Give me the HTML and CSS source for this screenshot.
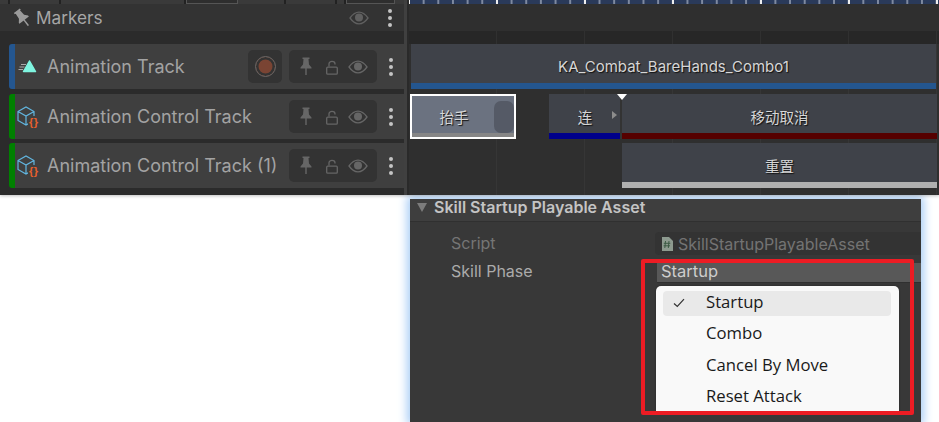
FILE: index.html
```html
<!DOCTYPE html>
<html lang="en">
<head>
    <meta charset="UTF-8">
    <title>Timeline</title>
    <link rel="stylesheet" href="styles.css">
</head>
<body>
<svg class="defs" width="0" height="0">
    <symbol id="eye" viewBox="0 0 20 14">
        <path d="M1 7C4 2.800 7 1.200 10 1.200S16 2.800 19 7C16 11.200 13 12.800 10 12.800S4 11.200 1 7Z" fill="none" stroke="currentColor" stroke-width="1.300"/>
        <circle cx="10" cy="6.600" r="4" fill="currentColor"/>
    </symbol>
    <symbol id="pin" viewBox="0 0 12 18">
        <path d="M2.500 0.500H9.500V2H8.500L9 7.500L11.500 10.500V11.500H0.500V10.500L3 7.500L3.500 2H2.500ZM5.300 11.500H6.700V18H5.300Z" fill="currentColor"/>
    </symbol>
    <symbol id="lock" viewBox="0 0 12 15">
        <path d="M3 6.500V3.800C3 0.500 9 0.500 9 3.800V4.500" fill="none" stroke="currentColor" stroke-width="1.300"/>
        <rect x="0.700" y="7.200" width="10.600" height="7" rx="1" fill="none" stroke="currentColor" stroke-width="1.300"/>
    </symbol>
    <symbol id="cube" viewBox="0 0 22 21">
        <path d="M1 5.500L9 1L17 5.500V14.500L9 19L1 14.500ZM1 5.500L9 10L17 5.500M9 10V19" fill="none" stroke="#62b6e0" stroke-width="1.200"/>
        <rect x="11" y="10" width="11" height="11" fill="#3f3f3f"/>
    </symbol>
</svg>

<div class="timeline">
    <div class="headers">
        <div class="toolbar-edge">
            <span class="edge-tab w10"></span>
            <span class="edge-tab w51"></span>
            <span class="edge-tab w125"></span>
            <span class="edge-tab w52 on"></span>
            <span class="edge-tab w48"></span>
            <span class="edge-tab w51"></span>
            <span class="edge-tab w9"></span>
            <span class="edge-tab w49 on"></span>
        </div>
        <div class="markers-row">
            <svg class="markers-pin" viewBox="0 0 12 18"><use href="#pin"/></svg>
            <span class="markers-name">Markers</span>
            <svg class="eye"><use href="#eye"/></svg>
            <div class="kebab"><i></i><i></i><i></i></div>
        </div>
        <div class="track blue first">
            <svg class="track-icon" viewBox="0 0 24 22">
                <path d="M12.500 5L18.500 15.500H6.500Z" fill="#7ff5e0" stroke="#7ff5e0" stroke-width="1.500" stroke-linejoin="round"/>
                <path d="M4 8.500H9M2.500 11H7.500M1.500 13.500H6" stroke="#a9a9a9" stroke-width="1"/>
            </svg>
            <span class="track-name">Animation Track</span>
            <div class="rec-box"><span class="rec"></span></div>
            <div class="btn-group">
                <svg class="pin"><use href="#pin"/></svg>
                <svg class="lock"><use href="#lock"/></svg>
                <svg class="eye"><use href="#eye"/></svg>
            </div>
            <div class="kebab"><i></i><i></i><i></i></div>
        </div>
        <div class="track green">
            <svg class="track-icon" viewBox="0 0 24 22">
                <use href="#cube" width="22" height="21"/>
                <text x="12" y="19.500" class="braces">{}</text>
            </svg>
            <span class="track-name">Animation Control Track</span>
            <div class="btn-group">
                <svg class="pin"><use href="#pin"/></svg>
                <svg class="lock"><use href="#lock"/></svg>
                <svg class="eye"><use href="#eye"/></svg>
            </div>
            <div class="kebab"><i></i><i></i><i></i></div>
        </div>
        <div class="track green last">
            <svg class="track-icon" viewBox="0 0 24 22">
                <use href="#cube" width="22" height="21"/>
                <text x="12" y="19.500" class="braces">{}</text>
            </svg>
            <span class="track-name">Animation Control Track (1)</span>
            <div class="btn-group">
                <svg class="pin"><use href="#pin"/></svg>
                <svg class="lock"><use href="#lock"/></svg>
                <svg class="eye"><use href="#eye"/></svg>
            </div>
            <div class="kebab"><i></i><i></i><i></i></div>
        </div>
    </div>
    <div class="splitter"></div>
    <div class="lanes">
        <div class="ruler"></div>
        <div class="marker-lane"></div>
        <div class="grid-band"></div>
        <div class="lane lane-one">
            <div class="clip clip-anim">
                <span class="clip-name">KA_Combat_BareHands_Combo1</span>
                <span class="clip-bar bar-blue"></span>
            </div>
        </div>
        <div class="lane lane-two">
            <div class="clip clip-selected">
                <span class="clip-name">抬手</span>
                <span class="blend"></span>
                <span class="clip-bar bar-grey"></span>
            </div>
            <div class="clip clip-combo">
                <span class="clip-name">连</span>
                <span class="clip-arrow"></span>
                <span class="clip-bar bar-navy"></span>
            </div>
            <div class="playhead"></div>
            <div class="clip clip-cancel">
                <span class="clip-name">移动取消</span>
                <span class="clip-bar bar-red"></span>
            </div>
        </div>
        <div class="lane lane-three">
            <div class="clip clip-reset">
                <span class="clip-name">重置</span>
                <span class="clip-bar bar-light"></span>
            </div>
        </div>
    </div>
</div>

<div class="inspector">
    <div class="insp-head">
        <span class="fold"></span>
        <span class="insp-title">Skill Startup Playable Asset</span>
    </div>
    <div class="prop prop-script">
        <span class="prop-label">Script</span>
        <div class="script-field">
            <svg class="cs-icon" viewBox="0 0 12 14">
                <path d="M1 0H8L12 4V14H1Z" fill="#8d9a8f"/>
                <path d="M4.500 4L3.800 11M8 4L7.300 11M2.800 6.300H9.300M2.600 8.800H9" stroke="#3c5a44" stroke-width="1"/>
            </svg>
            <span>SkillStartupPlayableAsset</span>
        </div>
    </div>
    <div class="prop prop-phase">
        <span class="prop-label">Skill Phase</span>
        <div class="phase-field">Startup</div>
    </div>

    <ul class="menu">
        <li class="active"><svg class="check" viewBox="0 0 12 10"><path d="M1 5.500L4.300 8.500L11 1.200" fill="none" stroke="#333" stroke-width="1.200"/></svg>Startup</li>
        <li>Combo</li>
        <li>Cancel By Move</li>
        <li>Reset Attack</li>
    </ul>
    <div class="red-box"></div>
</div>
</body>
</html>
```

FILE: styles.css
```css
*{
    margin:0;padding:0;
    box-sizing:border-box;
}
html,body{
    width:939px;
    height:422px;
    overflow:hidden;
    background:#fff;
}
body{
    font-family:Inter,"Noto Sans CJK SC",sans-serif;
}
.defs{
    display:block;
    height:0;
}

/* timeline window */
.timeline{
    position:relative;
    z-index:2;
    display:flex;
    height:195px;
    background:#2b2b2b;
    box-shadow:0 1px 3px rgba(0,0,0,.25);
}
.headers{
    width:404px;
    flex:none;
    background:#2b2b2b;
}
.toolbar-edge{
    display:flex;
    height:4px;
    background:#3a3a3a;
}
.edge-tab{
    height:4px;
    border-right:2px solid #222;
}
.edge-tab.on{
    background:#2e2e2e;
    border:1px solid #555;
    border-top:0;
    border-width:0 1px 1px 1px;
}
.w9{width:9px}
.w10{width:10px}
.w48{width:48px}
.w49{width:49px}
.w51{width:51px}
.w52{width:52px}
.w125{width:125px}

.markers-row{
    display:flex;
    align-items:center;
    height:27px;
    background:#333;
    margin-bottom:13px;
    padding-left:16px;
}
.markers-pin{
    width:13px;
    height:20px;
    color:#9a9a9a;
    transform:rotate(-38deg);
    margin-right:7px;
    flex:none;
}
.markers-name{
    flex:1;
    font-size:17.200px;
    color:#a6a6a6;
}
.markers-row .eye{
    color:#606060;
    margin-right:7px;
}
.eye{
    width:20px;
    height:14px;
    color:#666;
    flex:none;
}
.kebab{
    width:27px;
    flex:none;
    display:flex;
    flex-direction:column;
    align-items:center;
    gap:3px;
}
.kebab i{
    width:4px;
    height:4px;
    border-radius:50%;
    background:#c4c4c4;
}
.markers-row .kebab{
    width:28px;
}

.track{
    display:flex;
    align-items:center;
    height:45px;
    margin:0 0 5px 9px;
    background:#3f3f3f;
    border-left:6px solid;
    border-radius:3px 0 0 3px;
}
.track.blue{border-color:#24568f}
.track.green{
    border-color:#008000;
    margin-bottom:4px;
}
.track-icon{
    width:24px;
    height:22px;
    margin:0 6px 0 2px;
    flex:none;
}
.track-name{
    flex:1;
    font-size:18px;
    color:#a3a3a3;
    white-space:nowrap;
}
.braces{
    font-family:"Liberation Sans",sans-serif;
    font-size:11px;
    font-weight:bold;
    letter-spacing:.5px;
    fill:#e8602c;
}
.rec-box{
    width:34px;
    height:33px;
    margin-right:7px;
    background:#333;
    border-radius:5px;
    display:flex;
    align-items:center;
    justify-content:center;
    flex:none;
}
.rec{
    width:21px;
    height:21px;
    border-radius:50%;
    border:1.500px solid #666;
    background:#7a4433;
    box-shadow:inset 0 0 0 2.500px #333;
}
.btn-group{
    width:88px;
    height:33px;
    background:#333;
    border-radius:5px;
    display:flex;
    align-items:center;
    padding-left:11px;
    flex:none;
}
.pin{
    width:12px;
    height:18px;
    color:#666;
    margin-top:-2px;
}
.lock{
    width:12px;
    height:15px;
    color:#666;
    margin-left:14px;
    margin-top:1px;
}
.btn-group .eye{
    margin-left:10px;
}

.splitter{
    width:5px;
    flex:none;
    background:linear-gradient(90deg,#404040 3px,#2a2a2a 3px);
}

/* lanes on the right */
.lanes{
    flex:1;
    min-width:0;
    overflow:hidden;
    background-color:#2f2f2f;
    background-image:linear-gradient(90deg,transparent 87px,#363636 87px,#363636 89px,transparent 89px);
    background-size:88px 100%;
}
.ruler{
    height:4px;
    background-color:#2a3a5a;
    background-image:
        linear-gradient(90deg,#eee 2px,transparent 2px),
        linear-gradient(90deg,#7f8aa0 1.500px,transparent 1.500px),
        linear-gradient(#2a3a5a,#2a3a5a);
    background-size:88px 100%,14.670px 100%,100% 100%;
    background-position:-1px 0,-1px 0,0 0;
}
.marker-lane{
    height:27px;
    background:#2f2f2f;
}
.grid-band{
    height:13px;
    background:#272727 linear-gradient(90deg,transparent 87px,#303030 87px,#303030 89px,transparent 89px);
    background-size:88px 100%;
}
.lane{
    position:relative;
    display:flex;
    height:45px;
    margin-bottom:5px;
}
.lane-one{padding-left:2px}
.lane-two{
    padding-left:1px;
    margin-bottom:4px;
}
.lane-three{padding-left:213px}

.clip{
    position:relative;
    height:45px;
    background:#3f4249;
    display:flex;
    align-items:center;
    justify-content:center;
    flex:none;
}
.clip-name{
    font-size:14.500px;
    color:#d6d6d6;
    text-shadow:1px 1px 1px #111;
    white-space:nowrap;
}
.clip-bar{
    position:absolute;
    left:0;
    right:0;
    bottom:0;
    height:6px;
}
.clip-anim{width:525px}
.clip-anim .clip-name{
    font-size:15px;
}
.bar-blue{background:#24568f}
.clip-selected{
    width:106px;
    margin-right:33px;
    background:#6b7280;
    border:2px solid #fff;
    padding:0 18px 0 0;
}
.bar-grey{
    background:#868686;
    height:4px;
}
.blend{
    position:absolute;
    right:0;
    top:5px;
    bottom:4px;
    width:20px;
    border-radius:7px;
    background:#555a66;
}
.clip-combo{
    width:71px;
    padding-left:1px;
}
.bar-navy{background:#00008b}
.clip-arrow{
    position:absolute;
    left:63px;
    top:17px;
    border-left:5px solid #8c8c8c;
    border-top:4px solid transparent;
    border-bottom:4px solid transparent;
}
.playhead{
    position:relative;
    z-index:1;
    width:2px;
    flex:none;
    background:#333;
}
.playhead:before{
    content:"";
    position:absolute;
    left:-3px;
    top:0;
    border-top:6px solid #fff;
    border-left:5px solid transparent;
    border-right:5px solid transparent;
}
.clip-cancel,.clip-reset{width:315px}
.bar-red{background:#560000}
.bar-light{background:#b0b0b0}

/* inspector */
.inspector{
    position:relative;
    z-index:1;
    width:511px;
    height:223px;
    margin:4px 0 0 410px;
    background:#383838;
    box-shadow:0 0 9px 3px #a9cdf6;
}
.insp-head{
    display:flex;
    align-items:center;
    height:23px;
    background:#3e3e3e;
    border-bottom:1px solid #303030;
    padding:0 0 6px 7px;
}
.fold{
    width:0;
    height:0;
    border-top:9px solid #7c7c7c;
    border-left:5.500px solid transparent;
    border-right:5.500px solid transparent;
    margin-right:6px;
}
.insp-title{
    font-size:16px;
    font-weight:600;
    color:#c4c4c4;
    margin-left:1px;
}
.prop{
    display:flex;
    align-items:center;
    padding-left:41px;
    font-size:16px;
}
.prop-label{
    width:204px;
    flex:none;
}
.prop-script{
    margin-top:10px;
    height:23px;
    color:#757575;
}
.prop-script .prop-label{
    margin-top:-2px;
}
.script-field{
    flex:1;
    height:23px;
    display:flex;
    align-items:center;
    background:#333;
    border-radius:4px 0 0 4px;
    padding-left:6px;
    color:#737373;
}
.cs-icon{
    width:12px;
    height:14px;
    margin-right:5px;
}
.prop-phase{
    margin-top:8px;
    height:20px;
    color:#ababab;
}
.prop-phase .prop-label{
    width:206px;
    margin-top:-4px;
}
.phase-field{
    flex:1;
    height:20px;
    background:#585858;
    border-bottom:1px solid #303030;
    padding-left:4px;
    line-height:17px;
    font-size:16.500px;
    color:#cdcdcd;
}

.menu{
    position:absolute;
    left:246px;
    top:87px;
    width:243px;
    height:126px;
    padding:5px 8px 0 7px;
    background:#f9f9f9;
    border-radius:5px 5px 0 0;
    box-shadow:0 0 2px rgba(0,0,0,.4);
    list-style:none;
    font-family:"Open Sans","Noto Sans",sans-serif;
    font-size:16.700px;
    color:#1a1a1a;
}
.menu li{
    position:relative;
    height:25px;
    line-height:22px;
    margin-bottom:6.400px;
    padding-left:43px;
    border-radius:4px;
}
.menu li.active{
    background:#e9e9e9;
}
.check{
    position:absolute;
    left:10px;
    top:7px;
    width:12px;
    height:10px;
}
.red-box{
    position:absolute;
    left:231px;
    top:60px;
    width:273px;
    height:156px;
    border:4px solid #ed1c24;
    border-radius:2px;
}
```
